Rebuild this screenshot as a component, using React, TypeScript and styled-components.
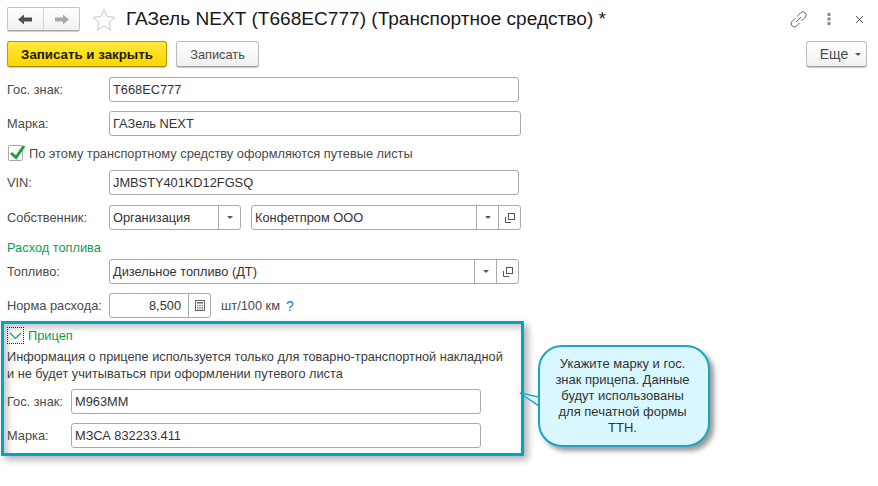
import React from "react";
import styled, { createGlobalStyle } from "styled-components";

const Global = createGlobalStyle`
  html, body { margin: 0; padding: 0; background: #fff; }
  body { font-family: "Liberation Sans", Arial, sans-serif; font-size: 12.8px; color: #4a4a4a; }
`;

const Page = styled.div`
  position: relative;
  width: 878px;
  height: 486px;
  overflow: hidden;
  padding: 7px 11px 0 7px;
  box-sizing: border-box;
`;

const Header = styled.div`
  display: flex;
  align-items: center;
  height: 24px;
`;

const NavGroup = styled.div`
  display: flex;
  width: 73px;
  height: 24px;
  box-sizing: border-box;
  border: 1px solid #c4c4c4;
  border-bottom-color: #a8a8a8;
  border-radius: 2px;
  background: linear-gradient(#fff, #f0f0f0);
  box-shadow: 0 1px 0 #cfcfcf;
`;

const NavButton = styled.div<{ $divided?: boolean }>`
  flex: 1;
  display: flex;
  align-items: center;
  justify-content: center;
  border-right: ${(p) => (p.$divided ? "1px solid #d2d2d2" : "none")};
`;

const StarBox = styled.div`
  display: flex;
  margin: 0 10px 0 12px;
`;

const Title = styled.div`
  font-size: 19.1px;
  color: #1a1a1a;
  white-space: nowrap;
  flex: 1;
`;

const HeaderIcons = styled.div`
  display: flex;
  align-items: center;
  gap: 20px;
  margin-right: 3px;
`;

const CloseIcon = styled.svg`
  margin-left: 4px;
`;

const Toolbar = styled.div`
  display: flex;
  margin-top: 10px;
  gap: 9px;
`;

const Button = styled.div<{ $primary?: boolean; $w: number }>`
  width: ${(p) => p.$w}px;
  height: 26px;
  box-sizing: border-box;
  display: flex;
  align-items: center;
  justify-content: center;
  border-radius: 3px;
  font-size: ${(p) => (p.$primary ? 13.3 : 12.8)}px;
  border: 1px solid ${(p) => (p.$primary ? "#b49b00" : "#bdbdbd")};
  border-bottom-color: ${(p) => (p.$primary ? "#a38c00" : "#a0a0a0")};
  background: ${(p) =>
    p.$primary ? "linear-gradient(#ffe93c, #fcd500)" : "linear-gradient(#fff, #f0f0f0)"};
  color: ${(p) => (p.$primary ? "#1c1c00" : "#4a4a4a")};
  font-weight: ${(p) => (p.$primary ? 700 : 400)};
  box-shadow: 0 1px 0 #cccccc;
`;

const MoreButton = styled(Button)`
  font-size: 14px;
  gap: 7px;
  padding-left: 8px;
`;

const Spacer = styled.div`
  flex: 1;
`;

const Row = styled.div<{ $top: number }>`
  display: flex;
  align-items: center;
  margin-top: ${(p) => p.$top}px;
`;

const Label = styled.div<{ $w: number }>`
  width: ${(p) => p.$w}px;
  flex: none;
  white-space: nowrap;
`;

const Field = styled.div<{ $w: number; $gap?: number }>`
  width: ${(p) => p.$w}px;
  height: 25px;
  box-sizing: border-box;
  flex: none;
  margin-right: ${(p) => p.$gap ?? 0}px;
  display: flex;
  align-items: stretch;
  border: 1px solid #a9a9a9;
  border-radius: 3px;
  background: #fff;
  color: #333;
`;

const FieldText = styled.div<{ $right?: boolean }>`
  flex: 1;
  display: flex;
  align-items: center;
  padding: 0 7px 0 3px;
  justify-content: ${(p) => (p.$right ? "flex-end" : "flex-start")};
  white-space: nowrap;
`;

const FieldButton = styled.div`
  width: 21px;
  flex: none;
  display: flex;
  align-items: center;
  justify-content: center;
  border-left: 1px solid #a9a9a9;
`;

const Caret = styled.div`
  width: 0;
  height: 0;
  border-left: 3px solid transparent;
  border-right: 3px solid transparent;
  border-top: 3px solid #555;
`;

const Unit = styled.div`
  margin-left: 10px;
`;

const Help = styled.div`
  margin-left: 6px;
  font-size: 14px;
  color: #2a78b0;
`;

const CheckRow = styled.div`
  display: flex;
  align-items: center;
  height: 16px;
  margin-top: 9px;
  padding-left: 1px;
`;

const CheckBox = styled.div`
  position: relative;
  width: 15px;
  height: 16px;
  box-sizing: border-box;
  border: 1px solid #a9a9a9;
  border-radius: 2px;
  margin-right: 6px;
`;

const CheckMark = styled.svg`
  position: absolute;
  left: 0;
  top: -2px;
`;

const Section = styled.div<{ $top: number }>`
  margin-top: ${(p) => p.$top}px;
  color: #129a55;
  line-height: 14px;
`;

const Frame = styled.div`
  width: 523px;
  height: 135px;
  margin: 3px 0 0 -6px;
  box-sizing: border-box;
  border: 3px solid #00a5c3;
  padding: 3px 3px 0;
  box-shadow: 4px 4px 7px rgba(0, 0, 0, 0.3), inset 4px 4px 6px rgba(0, 0, 0, 0.22);
`;

const Collapse = styled.div`
  display: flex;
  align-items: center;
  color: #129a55;
`;

const ChevronBox = styled.div`
  width: 17px;
  height: 17px;
  box-sizing: border-box;
  border: 1px dotted #222;
  display: flex;
  align-items: center;
  justify-content: center;
  margin-right: 4px;
`;

const Info = styled.div`
  margin-top: 4px;
  line-height: 17px;
  font-size: 12.75px;
  color: #3c3c3c;
  white-space: nowrap;
`;

const Callout = styled.div`
  position: absolute;
  left: 538px;
  top: 345px;
  width: 172px;
  height: 102px;
  box-sizing: border-box;
  padding: 9px 11px 8px 8px;
  border: 2px solid #1ea3c1;
  border-radius: 24px;
  background: #d9f7ff;
  box-shadow: 4px 4px 5px rgba(0, 0, 0, 0.4);
  color: #333;
  text-align: center;
  line-height: 16px;
  font-size: 13px;
  white-space: nowrap;
`;

const Tail = styled.svg`
  position: absolute;
  left: 519px;
  top: 392px;
`;

const Copy = () => (
  <svg width="10" height="10" viewBox="0 0 10 10" fill="none" stroke="#555" strokeWidth="1">
    <rect x="3.5" y="0.5" width="6" height="6" />
    <path d="M0.5 4v5.5H6" />
  </svg>
);

const Calc = () => (
  <svg width="10" height="11" viewBox="0 0 10 11" fill="none" stroke="#666" strokeWidth="1">
    <rect x="0.5" y="0.5" width="9" height="10" />
    <rect x="2" y="2" width="6" height="1.5" fill="#666" stroke="none" />
    <path d="M2 5.5h1.4M4.3 5.5h1.4M6.6 5.5h1.4M2 7.5h1.4M4.3 7.5h1.4M6.6 7.5h1.4M2 9h1.4M4.3 9h1.4M6.6 9h1.4" />
  </svg>
);

export default function App() {
  return (
    <Page>
      <Global />
      <Header>
        <NavGroup>
          <NavButton $divided>
            <svg width="15" height="11" viewBox="0 0 15 11">
              <path d="M0 5.5 6 0.5v3h8v4H6v3z" fill="#4f4f4f" />
            </svg>
          </NavButton>
          <NavButton>
            <svg width="15" height="11" viewBox="0 0 15 11">
              <path d="M15 5.5 9 0.5v3H1v4h8v3z" fill="#a9a9a9" />
            </svg>
          </NavButton>
        </NavGroup>
        <StarBox>
          <svg width="24" height="23" viewBox="0 0 24 23" fill="none">
            <path
              d="M12 1.2 15 8.6l8 .6-6.1 5.2 1.9 7.8L12 17.9l-6.8 4.3 1.9-7.8L1 9.2l8-.6z"
              stroke="#c9c9c9"
              strokeWidth="1"
            />
          </svg>
        </StarBox>
        <Title>ГАЗель NEXT (Т668ЕС777) (Транспортное средство) *</Title>
        <HeaderIcons>
          <svg width="17" height="17" viewBox="0 0 17 17" fill="none" stroke="#666" strokeWidth="1" strokeLinecap="round">
            <path d="M6.2 10.8 10.8 6.2" />
            <path d="M7.5 5.2 10.6 1.8a3.2 3.2 0 0 1 4.6 4.5L12 9.5" />
            <path d="M5 7.5 1.9 10.7a3.2 3.2 0 0 0 4.5 4.5L9.5 12" />
          </svg>
          <svg width="4" height="12" viewBox="0 0 4 12" fill="#8a8a8a">
            <rect x="0.5" y="0" width="3" height="3" />
            <rect x="0.5" y="4.5" width="3" height="3" />
            <rect x="0.5" y="9" width="3" height="3" />
          </svg>
          <CloseIcon width="9" height="9" viewBox="0 0 9 9" stroke="#555" strokeWidth="1">
            <path d="M1 1l7 7M8 1 1 8" />
          </CloseIcon>
        </HeaderIcons>
      </Header>

      <Toolbar>
        <Button $primary $w={160}>Записать и закрыть</Button>
        <Button $w={83}>Записать</Button>
        <Spacer />
        <MoreButton $w={61}>
          Еще
          <Caret />
        </MoreButton>
      </Toolbar>

      <Row $top={10}>
        <Label $w={102}>Гос. знак:</Label>
        <Field $w={410}><FieldText>Т668ЕС777</FieldText></Field>
      </Row>
      <Row $top={9}>
        <Label $w={102}>Марка:</Label>
        <Field $w={412}><FieldText>ГАЗель NEXT</FieldText></Field>
      </Row>
      <CheckRow>
        <CheckBox>
          <CheckMark width="17" height="16" viewBox="0 0 17 16" fill="none">
            <path d="M2 9 7 13.5 15 2" stroke="#1f9d3f" strokeWidth="3" />
          </CheckMark>
        </CheckBox>
        По этому транспортному средству оформляются путевые листы
      </CheckRow>
      <Row $top={9}>
        <Label $w={102}>VIN:</Label>
        <Field $w={410}><FieldText>JMBSTY401KD12FGSQ</FieldText></Field>
      </Row>
      <Row $top={10}>
        <Label $w={102}>Собственник:</Label>
        <Field $w={132} $gap={10}>
          <FieldText>Организация</FieldText>
          <FieldButton><Caret /></FieldButton>
        </Field>
        <Field $w={270}>
          <FieldText>Конфетпром ООО</FieldText>
          <FieldButton><Caret /></FieldButton>
          <FieldButton><Copy /></FieldButton>
        </Field>
      </Row>
      <Section $top={11}>Расход топлива</Section>
      <Row $top={4}>
        <Label $w={102}>Топливо:</Label>
        <Field $w={410}>
          <FieldText>Дизельное топливо (ДТ)</FieldText>
          <FieldButton><Caret /></FieldButton>
          <FieldButton><Copy /></FieldButton>
        </Field>
      </Row>
      <Row $top={9}>
        <Label $w={102}>Норма расхода:</Label>
        <Field $w={102}>
          <FieldText $right>8,500</FieldText>
          <FieldButton><Calc /></FieldButton>
        </Field>
        <Unit>шт/100 км</Unit>
        <Help>?</Help>
      </Row>

      <Frame>
        <Collapse>
          <ChevronBox>
            <svg width="13" height="8" viewBox="0 0 13 8" fill="none" stroke="#129a55" strokeWidth="1.2">
              <path d="M1 1l5.5 5.5L12 1" />
            </svg>
          </ChevronBox>
          Прицеп
        </Collapse>
        <Info>
          Информация о прицепе используется только для товарно-транспортной накладной
          <br />
          и не будет учитываться при оформлении путевого листа
        </Info>
        <Row $top={7}>
          <Label $w={64}>Гос. знак:</Label>
          <Field $w={410}><FieldText>М963ММ</FieldText></Field>
        </Row>
        <Row $top={9}>
          <Label $w={64}>Марка:</Label>
          <Field $w={410}><FieldText>МЗСА 832233.411</FieldText></Field>
        </Row>
      </Frame>

      <Tail width="24" height="20" viewBox="0 0 24 20" fill="#d9f7ff" stroke="#1ea3c1" strokeWidth="1.5">
        <path d="M1 1 20 5v9z" />
      </Tail>
      <Callout>
        Укажите марку и гос.
        <br />
        знак прицепа. Данные
        <br />
        будут использованы
        <br />
        для печатной формы
        <br />
        ТТН.
      </Callout>
    </Page>
  );
}
